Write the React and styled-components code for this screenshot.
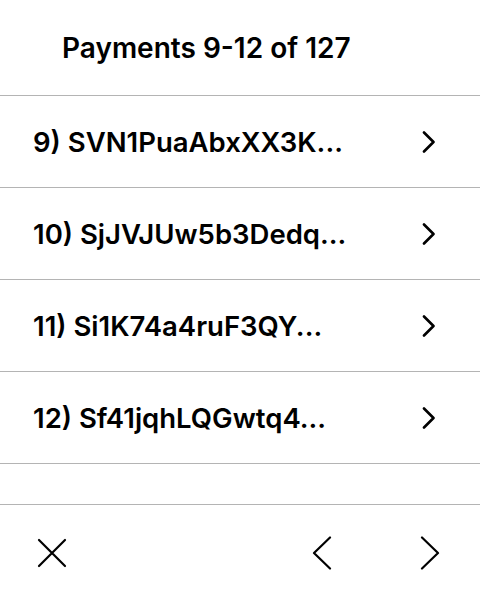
import React from "react";
import styled, { createGlobalStyle } from "styled-components";

const Global = createGlobalStyle`
  html, body { margin: 0; padding: 0; background: #fff; }
  body { font-family: Inter, "Noto Sans", "Liberation Sans", sans-serif; color: #000; }
`;

const Screen = styled.div`
  width: 480px;
  height: 600px;
  display: flex;
  flex-direction: column;
  background: #fff;
  overflow: hidden;
`;

const Header = styled.div`
  height: 95px;
  flex: none;
  display: flex;
  align-items: center;
  padding-left: 62px;
  border-bottom: 1px solid #b4b4b4;
  box-sizing: content-box;
`;

const Title = styled.h1`
  margin: 0;
  font-size: 28px;
  font-weight: 600;
  letter-spacing: 0;
`;

const List = styled.div`
  display: flex;
  flex-direction: column;
`;

const Row = styled.div`
  height: 91px;
  display: flex;
  align-items: center;
  justify-content: space-between;
  padding: 0 44px 0 33px;
  border-bottom: 1px solid #b4b4b4;
`;

const RowLabel = styled.span`
  font-size: 27.5px;
  font-weight: 600;
`;

const Spacer = styled.div`
  height: 40px;
  flex: none;
  border-bottom: 1px solid #b4b4b4;
`;

const Footer = styled.div`
  height: 95px;
  flex: none;
  display: flex;
  align-items: center;
  padding: 0 26px 0 28px;
`;

const IconButton = styled.button`
  width: 48px;
  height: 48px;
  border: 0;
  padding: 0;
  background: none;
  display: flex;
  align-items: center;
  justify-content: center;
  cursor: pointer;
`;

const Grow = styled.div`
  flex: 1;
`;

const NavGroup = styled.div`
  display: flex;
  gap: 60px;
`;

const RowChevron = () => (
  <svg width="14" height="22" viewBox="0 0 14 22" fill="none">
    <polyline points="2,1.5 11.5,11 2,20.5" stroke="#000" strokeWidth="2.6" strokeLinecap="round" strokeLinejoin="round" />
  </svg>
);

const CloseIcon = () => (
  <svg width="30" height="30" viewBox="0 0 30 30" fill="none">
    <path d="M2 2 L28 28 M28 2 L2 28" stroke="#000" strokeWidth="2.2" strokeLinecap="round" />
  </svg>
);

const NavChevron = ({ dir }) => (
  <svg width="20" height="34" viewBox="0 0 20 34" fill="none">
    {dir === "left" ? (
      <polyline points="18,1.5 2,17 18,32.5" stroke="#000" strokeWidth="2.2" strokeLinecap="round" strokeLinejoin="round" />
    ) : (
      <polyline points="2,1.5 18,17 2,32.5" stroke="#000" strokeWidth="2.2" strokeLinecap="round" strokeLinejoin="round" />
    )}
  </svg>
);

const payments = [
  "9) SVN1PuaAbxXX3K...",
  "10) SjJVJUw5b3Dedq...",
  "11) Si1K74a4ruF3QY...",
  "12) Sf41jqhLQGwtq4...",
];

export default function App() {
  return (
    <>
      <Global />
      <Screen>
        <Header>
          <Title>Payments 9-12 of 127</Title>
        </Header>
        <List>
          {payments.map((p) => (
            <Row key={p}>
              <RowLabel>{p}</RowLabel>
              <RowChevron />
            </Row>
          ))}
        </List>
        <Spacer />
        <Footer>
          <IconButton aria-label="close"><CloseIcon /></IconButton>
          <Grow />
          <NavGroup>
            <IconButton aria-label="previous"><NavChevron dir="left" /></IconButton>
            <IconButton aria-label="next"><NavChevron dir="right" /></IconButton>
          </NavGroup>
        </Footer>
      </Screen>
    </>
  );
}
